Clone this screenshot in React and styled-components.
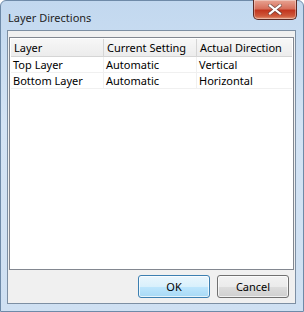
import React from 'react';
import styled, { createGlobalStyle } from "styled-components";

const GlobalStyle = createGlobalStyle`
  html, body { margin: 0; padding: 0; }
  body {
    width: 304px;
    height: 312px;
    overflow: hidden;
    font-family: "Noto Sans", "Open Sans", sans-serif;
    background: #fff;
  }
`;

const rows = [
  { layer: "Top Layer", setting: "Automatic", direction: "Vertical" },
  { layer: "Bottom Layer", setting: "Automatic", direction: "Horizontal" },
];

const App = () => {
  return (
    <>
      <GlobalStyle />
      <Window>
        <TitleBar>
          <Title>Layer Directions</Title>
          <CloseButton>
            <svg width="14" height="11" viewBox="0 0 14 11">
              <path d="M2 1.5 L12 9.5 M12 1.5 L2 9.5" stroke="#3a3a3a" strokeWidth="3.6" strokeLinecap="square" opacity="0.55" />
              <path d="M2 1.5 L12 9.5 M12 1.5 L2 9.5" stroke="#fff" strokeWidth="2.2" strokeLinecap="square" />
            </svg>
          </CloseButton>
        </TitleBar>
        <Client>
          <ListBox>
            <Table>
              <thead>
                <tr>
                  <HeadCell>Layer</HeadCell>
                  <HeadCell>Current Setting</HeadCell>
                  <HeadCell last>Actual Direction</HeadCell>
                </tr>
              </thead>
              <tbody>
                {rows.map((r) => (
                  <tr key={r.layer}>
                    <Cell>{r.layer}</Cell>
                    <Cell>{r.setting}</Cell>
                    <Cell last>{r.direction}</Cell>
                  </tr>
                ))}
              </tbody>
            </Table>
          </ListBox>
          <ButtonRow>
            <Button primary>OK</Button>
            <Button>Cancel</Button>
          </ButtonRow>
        </Client>
      </Window>
    </>
  );
};

const Window = styled.div`
  width: 304px;
  height: 312px;
  box-sizing: border-box;
  display: flex;
  flex-direction: column;
  padding: 0 7px 7px 6px;
  background: linear-gradient(to bottom, #c2d8ef 0%, #d3e3f4 40%, #cfe0f2 100%);
  border: 1px solid #6e8aa8;
  border-radius: 6px 6px 0 0;
`;

const TitleBar = styled.div`
  height: 29px;
  display: flex;
  align-items: flex-start;
  justify-content: space-between;
  position: relative;
`;

const Title = styled.div`
  margin-top: 9px;
  margin-left: 1px;
  font-size: 11px;
  color: #1e1e1e;
`;

const CloseButton = styled.div`
  width: 44px;
  height: 20px;
  margin-right: -1px;
  margin-top: -1px;
  box-sizing: border-box;
  display: flex;
  align-items: center;
  justify-content: center;
  border: 1px solid #5b2a25;
  border-top: none;
  border-radius: 0 0 5px 5px;
  background: linear-gradient(to bottom, #e8a493 0%, #d7705c 45%, #c2361f 55%, #cf5a3c 85%, #e59b7c 100%);
  box-shadow: inset 0 0 0 1px rgba(255, 255, 255, 0.35);
`;

const Client = styled.div`
  flex: 1;
  display: flex;
  flex-direction: column;
  background: #f0f0f0;
  border: 1px solid #7d8fa3;
  padding: 6px 1px 5px 1px;
`;

const ListBox = styled.div`
  flex: 1;
  background: #fff;
  border: 1px solid #828790;
  padding: 1px;
`;

const Table = styled.table`
  border-collapse: collapse;
  width: 100%;
  table-layout: fixed;
  font-size: 11px;
  color: #000;
`;

const HeadCell = styled.th`
  text-align: left;
  font-weight: normal;
  height: 17px;
  padding: 0 0 0 3px;
  background: linear-gradient(to bottom, #f7f7f7 0%, #ececec 100%);
  border-bottom: 1px solid #d5d5d5;
  border-right: ${(p) => (p.last ? "none" : "1px solid #d5d5d5")};
  white-space: nowrap;
  overflow: hidden;
  &:nth-child(1) { width: 89px; }
  &:nth-child(2) { width: 89px; }
`;

const Cell = styled.td`
  height: 15px;
  padding: 0 0 0 2px;
  border-bottom: 1px solid #f0f0f0;
  border-right: ${(p) => (p.last ? "none" : "1px solid #f0f0f0")};
  white-space: nowrap;
  overflow: hidden;
`;

const ButtonRow = styled.div`
  display: flex;
  justify-content: flex-end;
  gap: 7px;
  padding: 5px 5px 0 0;
`;

const Button = styled.button`
  width: 72px;
  height: 23px;
  font-family: "Noto Sans", "Open Sans", sans-serif;
  font-size: 11px;
  color: #000;
  border-radius: 3px;
  border: 1px solid ${(p) => (p.primary ? "#3c7fb1" : "#707070")};
  background: ${(p) =>
    p.primary
      ? "linear-gradient(to bottom, #eaf6fd 0%, #d9f0fc 50%, #bee6fd 51%, #a7d9f5 100%)"
      : "linear-gradient(to bottom, #f2f2f2 0%, #ebebeb 50%, #dddddd 51%, #cfcfcf 100%)"};
  box-shadow: inset 0 0 0 1px rgba(255, 255, 255, 0.7);
  padding: 0;
`;

export default App;
